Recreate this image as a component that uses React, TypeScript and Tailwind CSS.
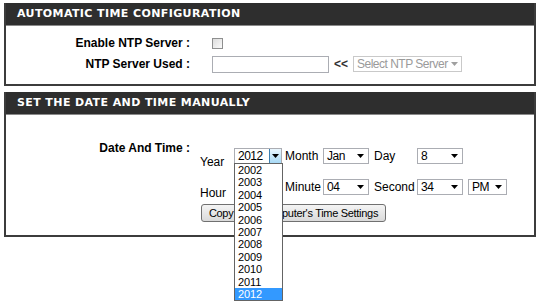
import React from 'react';

const years = ['2002', '2003', '2004', '2005', '2006', '2007', '2008', '2009', '2010', '2011', '2012'];

function Arrow({ color = '#000' }: { color?: string }) {
    return (
        <svg width="7" height="4" viewBox="0 0 7 4" className="shrink-0">
            <path d="M0 0 H7 L3.5 4 Z" fill={color} />
        </svg>
    );
}

function FakeSelect({ value, width, open = false }: { value: string; width: string; open?: boolean }) {
    return (
        <div className={`relative h-[16px] ${width} shrink-0`}>
            <div className="flex h-full items-center border border-[#abadb3] bg-white">
                <span className="flex-1 whitespace-nowrap pl-[3px] text-[12px] leading-none tracking-[-0.5px] text-black">{value}</span>
                {open ? (
                    <div className="flex h-full w-[12px] items-center justify-center border-l border-[#3c7fb1] bg-gradient-to-b from-[#eaf6fd] to-[#a7d9f5]">
                        <Arrow />
                    </div>
                ) : (
                    <div className="flex w-[16px] items-center justify-center">
                        <Arrow />
                    </div>
                )}
            </div>
            {open && (
                <div className="absolute left-0 top-[15px] z-10 w-[49px] border border-[#646464] bg-white">
                    {years.map((y) => (
                        <div
                            key={y}
                            className={`h-[12.4px] pl-[3px] text-[11px] leading-[12.4px] tracking-[-0.1px] ${
                                y === '2012' ? 'bg-[#3399ff] text-white' : 'text-black'
                            }`}
                        >
                            {y}
                        </div>
                    ))}
                </div>
            )}
        </div>
    );
}

function SectionHeader({ title }: { title: string }) {
    return (
        <div className="flex h-[23px] items-center border-b border-[#8a8a8a] bg-[#2e2e2e] pl-[11px] pt-[1px]">
            <span className="font-['DejaVu_Sans',sans-serif] text-[11px] font-bold tracking-[0.4px] text-white">
                {title}
            </span>
        </div>
    );
}

export default function App() {
    return (
        <div className="h-[308px] w-[540px] bg-white pl-[4px] pt-[3px] font-['Liberation_Sans',sans-serif] text-black">
            {/* Automatic time configuration */}
            <div className="w-[532px] border-x-2 border-b-2 border-[#3c3c3c]">
                <SectionHeader title="AUTOMATIC TIME CONFIGURATION" />
                <div className="pb-[10px] pt-[7px]">
                    <div className="flex h-[20px] items-center">
                        <span className="w-[184px] text-right text-[12px] font-bold">Enable NTP Server :</span>
                        <div className="ml-[22px] h-[11px] w-[11px] border border-[#8e8f8f] bg-gradient-to-br from-[#dcdcdc] to-[#fafafa]" />
                    </div>
                    <div className="mt-[1px] flex h-[20px] items-center">
                        <span className="w-[184px] text-right text-[12px] font-bold">NTP Server Used :</span>
                        <div className="ml-[22px] h-[17px] w-[117px] border border-[#abadb3] bg-white" />
                        <span className="ml-[5px] text-[12px] font-bold text-[#333]">&lt;&lt;</span>
                        <div className="ml-[5px] flex h-[16px] w-[109px] items-center border border-[#c9c9c9] bg-white">
                            <span className="flex-1 whitespace-nowrap pl-[3px] text-[12px] leading-none tracking-[-0.5px] text-[#9a9a9a]">Select NTP Server</span>
                            <div className="flex w-[14px] items-center justify-center">
                                <Arrow color="#a0a0a0" />
                            </div>
                        </div>
                    </div>
                </div>
            </div>

            {/* Manual date and time */}
            <div className="mt-[6px] w-[532px] border-x-2 border-b-2 border-[#3c3c3c]">
                <SectionHeader title="SET THE DATE AND TIME MANUALLY" />
                <div className="flex pb-[13px]">
                    <div className="w-[184px] pt-[26px] text-right text-[12px] font-bold leading-[14px]">Date And Time :</div>
                    <div className="ml-[10px] pt-[33px] text-[12px]">
                        <div className="flex h-[16px] items-center">
                            <span className="mt-[12px] w-[34px] shrink-0">Year</span>
                            <FakeSelect value="2012" width="w-[48px]" open />
                            <span className="ml-[3px] w-[38px] shrink-0">Month</span>
                            <FakeSelect value="Jan" width="w-[46px]" />
                            <span className="ml-[5px] w-[43px] shrink-0">Day</span>
                            <FakeSelect value="8" width="w-[46px]" />
                        </div>
                        <div className="mt-[15px] flex h-[16px] items-center">
                            <span className="mt-[12px] w-[34px] shrink-0">Hour</span>
                            {/* hour select sits under the open year list */}
                            <FakeSelect value="" width="w-[48px]" />
                            <span className="ml-[3px] w-[38px] shrink-0">Minute</span>
                            <FakeSelect value="04" width="w-[46px]" />
                            <span className="ml-[5px] w-[43px] shrink-0">Second</span>
                            <FakeSelect value="34" width="w-[46px]" />
                            <div className="ml-[5px]">
                                <FakeSelect value="PM" width="w-[39px]" />
                            </div>
                        </div>
                        <button className="ml-[1px] mt-[9px] flex h-[18px] w-[185px] items-center justify-center rounded-[3px] border border-[#707070] bg-gradient-to-b from-[#f4f4f4] to-[#dadada] text-[11px] tracking-[-0.3px]">
                            Copy Your Computer's Time Settings
                        </button>
                    </div>
                </div>
            </div>
        </div>
    );
}
